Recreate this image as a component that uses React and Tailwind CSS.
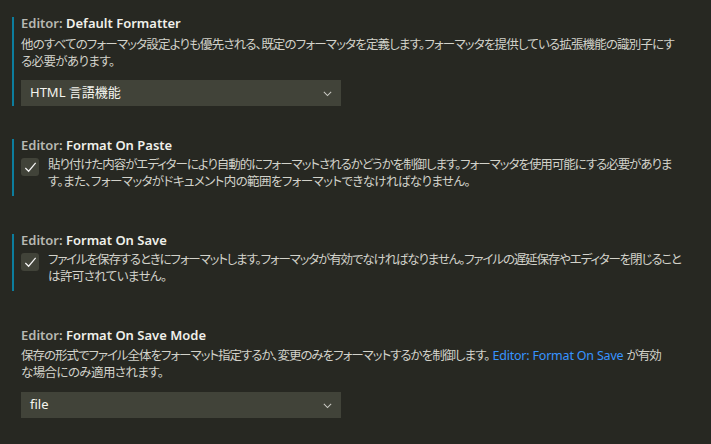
import React from 'react';

const font = { fontFamily: '"Noto Sans", "Noto Sans CJK JP", sans-serif' };

function Title({ name }) {
  return (
    <div className="text-[13px] leading-[12px] font-semibold whitespace-nowrap">
      <span className="text-[#b8b8b2]">Editor: </span>
      <span className="text-[#f0f0ea]">{name}</span>
    </div>
  );
}

// each line carries its own tracking so the wrap points match the original
function Lines({ lines }) {
  return (
    <div className="text-[12.5px] leading-[17px] text-[#d2d2ca] [font-feature-settings:'palt']">
      {lines.map(([text, cls], i) => (
        <div key={i} className={`whitespace-nowrap ${cls}`}>{text}</div>
      ))}
    </div>
  );
}

function Chevron() {
  return (
    <svg width="13" height="13" viewBox="0 0 16 16" fill="none" stroke="#c8c8c2" strokeWidth="1.3">
      <path d="M3.5 6l4.5 4.5L12.5 6" />
    </svg>
  );
}

function Select({ value }) {
  return (
    <div className="w-[320px] h-[26px] bg-[#414339] flex items-center justify-between pl-[9px] pr-[7px] text-[13px] text-[#f5f5ef] [font-feature-settings:'palt']">
      <span>{value}</span>
      <Chevron />
    </div>
  );
}

function Check() {
  return (
    <div className="w-[18px] h-[18px] mt-[2px] shrink-0 rounded-[3px] bg-[#414339] flex items-center justify-center">
      <svg width="15" height="15" viewBox="0 0 16 16" fill="none" stroke="#f5f5f5" strokeWidth="1.3">
        <path d="M2.5 8.5l3.5 3.5L13.5 3" />
      </svg>
    </div>
  );
}

export default function App() {
  return (
    <div style={font} className="w-[711px] h-[444px] overflow-hidden bg-[#272822] pt-[17px]">
      <div className="ml-3 border-l-2 border-[#0c7d9d] pl-[7px]">
        <Title name="Default Formatter" />
        <div className="mt-[7px]">
          <Lines lines={[
            ['他のすべてのフォーマッタ設定よりも優先される、既定のフォーマッタを定義します。フォーマッタを提供している拡張機能の識別子にす', 'tracking-[-0.83px]'],
            ['る必要があります。', 'tracking-[-0.6px]'],
          ]} />
        </div>
        <div className="mt-[10px]">
          <Select value="HTML 言語機能" />
        </div>
      </div>

      <div className="ml-3 mt-[33px] border-l-2 border-[#0c7d9d] pl-[7px] pb-[6px]">
        <Title name="Format On Paste" />
        <div className="mt-[5px] flex gap-[9px]">
          <Check />
          <Lines lines={[
            ['貼り付けた内容がエディターにより自動的にフォーマットされるかどうかを制御します。フォーマッタを使用可能にする必要がありま', 'tracking-[-1.05px]'],
            ['す。また、フォーマッタがドキュメント内の範囲をフォーマットできなければなりません。', 'tracking-[-0.6px]'],
          ]} />
        </div>
      </div>

      <div className="ml-3 mt-[38px] border-l-2 border-[#0c7d9d] pl-[7px] pb-[6px]">
        <Title name="Format On Save" />
        <div className="mt-[5px] flex gap-[9px]">
          <Check />
          <Lines lines={[
            ['ファイルを保存するときにフォーマットします。フォーマッタが有効でなければなりません。ファイルの遅延保存やエディターを閉じること', 'tracking-[-1.15px]'],
            ['は許可されていません。', 'tracking-[-0.6px]'],
          ]} />
        </div>
      </div>

      <div className="ml-3 mt-[38px] border-l-2 border-transparent pl-[7px]">
        <Title name="Format On Save Mode" />
        <div className="mt-[6px]">
          <Lines lines={[
            [<>保存の形式でファイル全体をフォーマット指定するか、変更のみをフォーマットするかを制御します。<span className="text-[#3794ff] tracking-[-0.2px]"> Editor: Format On Save </span>が有効</>, 'tracking-[-1.03px]'],
            ['な場合にのみ適用されます。', 'tracking-[-0.6px]'],
          ]} />
        </div>
        <div className="mt-[11px]">
          <Select value="file" />
        </div>
      </div>
    </div>
  );
}
